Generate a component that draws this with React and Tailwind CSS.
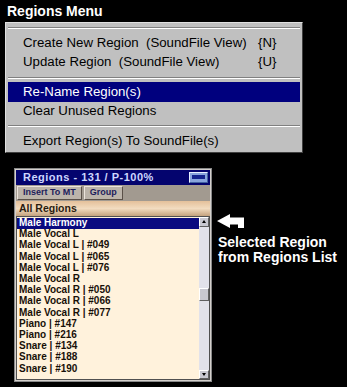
import React from "react";

const items = [
  "Male Vocal L",
  "Male Vocal L | #049",
  "Male Vocal L | #065",
  "Male Vocal L | #076",
  "Male Vocal R",
  "Male Vocal R | #050",
  "Male Vocal R | #066",
  "Male Vocal R | #077",
  "Piano | #147",
  "Piano | #216",
  "Snare | #134",
  "Snare | #188",
  "Snare | #190",
];

const LS = { fontFamily: '"Liberation Sans", Arial, sans-serif' };

function Sep() {
  return (
    <div className="mx-[2px] flex flex-col">
      <div className="h-px bg-[#808080]" />
      <div className="h-px bg-white" />
    </div>
  );
}

function Item({ text, shortcut, active }) {
  return (
    <div
      className={`mx-[2px] flex h-[20px] items-center pl-[15px] text-[13.25px] leading-none ${
        active ? "bg-[#00007e] text-white" : "text-black"
      }`}
    >
      <span className="w-[235px] whitespace-pre">{text}</span>
      {shortcut && <span>{shortcut}</span>}
    </div>
  );
}

function Btn({ children }) {
  return (
    <div className="flex h-[14px] items-center border border-b-[#5a5048] border-l-[#ece4dc] border-r-[#5a5048] border-t-[#ece4dc] bg-[#bcb4aa] px-[5px] text-[9px] font-bold leading-none text-[#1c1c5c]">
      {children}
    </div>
  );
}

export default function App() {
  return (
    <div className="relative h-[387px] w-[347px] overflow-hidden bg-black" style={LS}>
      <div className="pl-[7px] pt-[3px] text-[14px] font-bold leading-[16px] text-white">
        Regions Menu
      </div>
      <div className="ml-[5px] mt-[3px] w-[298px] border border-b-[#404040] border-l-[#e0e0e0] border-r-[#404040] border-t-[#e0e0e0] bg-[#c0c0c0] pb-[1px] pt-[4px]">
        <Sep />
        <div className="h-[4px]" />
        <div className="-my-[0.5px]">
          <Item text="Create New Region  (SoundFile View)" shortcut="{N}" />
        </div>
        <div className="-mt-[1px]">
          <Item text="Update Region  (SoundFile View)" shortcut="{U}" />
        </div>
        <div className="h-[5px]" />
        <Sep />
        <div className="h-[3px]" />
        <Item text="Re-Name Region(s)" active />
        <div className="-mt-[1px]">
          <Item text="Clear Unused Regions" />
        </div>
        <div className="h-[4px]" />
        <Sep />
        <div className="h-[4px]" />
        <Item text="Export Region(s) To SoundFile(s)" />
      </div>

      <div className="mt-[15px] flex">
        <div className="ml-[14px] w-[198px] border border-[#8a8a8a] bg-[#d4d0cc] p-[1px]">
          <div className="flex h-[15px] items-center justify-between bg-[#04046e] pl-[7px] pr-[2px]">
            <span className="text-[11px] font-bold leading-none tracking-[0.5px] text-[#cdd6ff]">
              Regions - 131 / P-100%
            </span>
            <div className="flex h-[11px] w-[19px] items-center justify-center border border-b-[#4060a0] border-l-[#e8f0ff] border-r-[#4060a0] border-t-[#e8f0ff] bg-[#88a4dc]">
              <div className="h-[4px] w-[13px] bg-[#14248e]" />
            </div>
          </div>
          <div className="flex h-[16px] items-center gap-[2px] bg-[#a29a90] px-[1px]">
            <Btn>Insert To MT</Btn>
            <Btn>Group</Btn>
          </div>
          <div className="flex h-[15px] items-center bg-gradient-to-b from-[#e4c09a] via-[#f2dcc0] to-[#c4a27e] pl-[3px] text-[10.5px] font-bold leading-none text-[#2a1c10]">
            All Regions
          </div>
          <div className="flex border border-[#505050] bg-[#fff2dc]">
            <div className="flex-1 pt-[1px]">
              <div className="flex h-[11.2px] items-center bg-[#0a0a80] pl-[2px] text-[10px] font-bold leading-none text-white">
                Male Harmony
              </div>
              {items.map((t) => (
                <div key={t} className="flex h-[11.2px] items-center pl-[2px] text-[10px] font-bold leading-none text-[#181008]">
                  {t}
                </div>
              ))}
              <div className="h-[5px]" />
            </div>
            <div className="flex w-[10px] flex-col bg-[#e2e2ea]">
              <div className="flex h-[10px] items-center justify-center border border-b-[#606060] border-l-white border-r-[#606060] border-t-white bg-[#c8c8d0]">
                <div className="h-0 w-0 border-x-[2px] border-b-[3px] border-x-transparent border-b-black" />
              </div>
              <div className="h-[61px]" />
              <div className="h-[13px] border border-b-[#606060] border-l-white border-r-[#606060] border-t-white bg-[#c8c8d0]" />
              <div className="flex-1" />
              <div className="flex h-[9px] items-center justify-center border border-b-[#606060] border-l-white border-r-[#606060] border-t-white bg-[#c8c8d0]">
                <div className="h-0 w-0 border-x-[2px] border-t-[3px] border-x-transparent border-t-black" />
              </div>
            </div>
          </div>
        </div>

        <div className="ml-[5px] mt-[46px] flex flex-col">
          <svg width="28" height="15" viewBox="0 0 28 15">
            <path d="M0 7 L13 0 L13 3.5 L27 3.5 L27 14 L21 14 L21 10.5 L13 10.5 L13 14 Z" fill="white" />
          </svg>
          <div className="ml-[1px] mt-[6px] text-[14px] font-bold leading-[15px] text-white">
            Selected Region
            <br />
            from Regions List
          </div>
        </div>
      </div>
    </div>
  );
}
